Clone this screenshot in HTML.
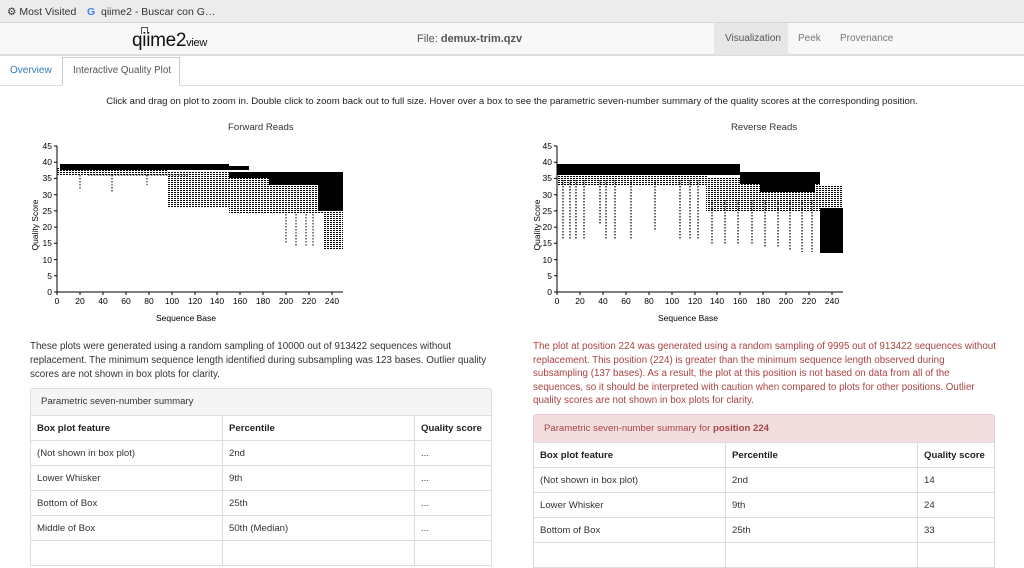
<!DOCTYPE html>
<html><head><meta charset="utf-8"><style>
*{margin:0;padding:0;box-sizing:border-box}
body{width:1024px;height:543px;overflow:hidden;background:#fff;font-family:"Liberation Sans",sans-serif;color:#333;position:relative;font-size:11px}
.a{position:absolute;white-space:nowrap}
table{border-collapse:collapse;position:absolute;font-size:9.6px;background:#fff}
td{border:1px solid #ddd;padding:0 6px;height:25px;vertical-align:middle}
th{border:1px solid #ddd;padding:0 6px;height:25px;text-align:left;font-weight:bold;color:#222}
</style></head><body>
<div class="a" style="left:0;top:0;width:1024px;height:23px;background:#ececec;border-bottom:1px solid #d6d6d6"></div>
<div class="a" style="left:7px;top:6px;font-size:10.5px;color:#333">⚙ Most Visited</div>
<div class="a" style="left:87px;top:6px;font-size:10.5px;color:#333"><span style="color:#4285f4;font-weight:bold">G</span>&nbsp; qiime2 - Buscar con G…</div>
<div class="a" style="left:0;top:23px;width:1024px;height:33px;background:#f8f8f8;border-bottom:2px solid #ddd"></div>
<div class="a" style="left:132px;top:30px;font-size:19px;color:#111;letter-spacing:-0.3px">qiime2<span style="font-size:11px">view</span></div>
<div class="a" style="left:141px;top:27px;width:7px;height:7px;border:1.5px solid #555;border-bottom:none"></div>
<div class="a" style="left:417px;top:33px;font-size:11px;color:#555">File: <b>demux-trim.qzv</b></div>
<div class="a" style="left:714px;top:23px;width:74px;height:32px;background:#e7e7e7"></div>
<div class="a" style="left:725px;top:33px;font-size:10px;color:#555">Visualization</div>
<div class="a" style="left:798px;top:33px;font-size:10px;color:#777">Peek</div>
<div class="a" style="left:840px;top:33px;font-size:10px;color:#777">Provenance</div>
<div class="a" style="left:0;top:85px;width:1024px;height:1px;background:#ddd"></div>
<div class="a" style="left:10px;top:65px;font-size:10px;color:#337ab7">Overview</div>
<div class="a" style="left:62px;top:57px;width:118px;height:29px;border:1px solid #ccc;border-bottom-color:#fff;background:#fff"></div>
<div class="a" style="left:73px;top:65px;font-size:9.8px;color:#555">Interactive Quality Plot</div>
<div class="a" style="left:0;top:96px;width:1024px;text-align:center;font-size:9.6px;color:#222">Click and drag on plot to zoom in. Double click to zoom back out to full size. Hover over a box to see the parametric seven-number summary of the quality scores at the corresponding position.</div>
<div class="a" style="left:228px;top:122px;font-size:9.6px;color:#333">Forward Reads</div>
<div class="a" style="left:731px;top:122px;font-size:9.6px;color:#333">Reverse Reads</div>

<svg class="a" style="left:0;top:135px" width="1024" height="190" viewBox="0 135 1024 190" font-family="Liberation Sans" font-size="8.5" fill="#000">
<defs><pattern id="s" patternUnits="userSpaceOnUse" width="3" height="2"><rect width="2" height="1" fill="#000"/></pattern></defs>
<g id="L">
<rect x="57" y="168" width="111" height="7" fill="url(#s)"/>
<rect x="168" y="172" width="61" height="36" fill="url(#s)"/>
<rect x="229" y="178" width="94" height="36" fill="url(#s)"/>
<rect x="323" y="211" width="20" height="39" fill="url(#s)"/>
<rect x="60" y="164" width="169" height="6"/>
<rect x="229" y="166" width="20" height="4"/>
<rect x="229" y="172" width="114" height="6"/>
<rect x="269" y="172" width="74" height="13"/>
<rect x="318" y="185" width="25" height="26"/>
<g stroke="#000" stroke-dasharray="1.5 1.5" stroke-width="1">
<line x1="88" y1="175" x2="188" y2="175"/><line x1="112" y1="175" x2="112" y2="193"/><line x1="286" y1="214" x2="286" y2="244"/><line x1="296" y1="214" x2="296" y2="246"/><line x1="306" y1="214" x2="306" y2="246"/><line x1="313" y1="214" x2="313" y2="246"/><line x1="80" y1="175" x2="80" y2="190"/><line x1="147" y1="175" x2="147" y2="185"/>
</g></g>
<rect x="557" y="164" width="183" height="11"/>
<rect x="557" y="175" width="150" height="10" fill="url(#s)"/>
<rect x="706" y="178" width="114" height="34" fill="url(#s)"/>
<rect x="740" y="172" width="80" height="12"/>
<rect x="760" y="184" width="55" height="8"/>
<rect x="820" y="185" width="23" height="22" fill="url(#s)"/>
<rect x="820" y="208" width="23" height="45"/>
<g stroke="#000" stroke-dasharray="1.5 1.5" stroke-width="1.2">
<line x1="563" y1="180" x2="563" y2="240"/><line x1="570" y1="180" x2="570" y2="240"/><line x1="576" y1="180" x2="576" y2="240"/><line x1="584" y1="180" x2="584" y2="240"/><line x1="600" y1="180" x2="600" y2="225"/><line x1="606" y1="180" x2="606" y2="240"/><line x1="615" y1="180" x2="615" y2="240"/><line x1="631" y1="180" x2="631" y2="240"/><line x1="655" y1="180" x2="655" y2="230"/><line x1="680" y1="180" x2="680" y2="240"/><line x1="690" y1="180" x2="690" y2="240"/><line x1="698" y1="180" x2="698" y2="240"/><line x1="712" y1="200" x2="712" y2="245"/><line x1="725" y1="200" x2="725" y2="245"/><line x1="738" y1="200" x2="738" y2="245"/><line x1="752" y1="200" x2="752" y2="245"/><line x1="765" y1="200" x2="765" y2="248"/><line x1="778" y1="200" x2="778" y2="248"/><line x1="790" y1="200" x2="790" y2="250"/><line x1="802" y1="200" x2="802" y2="252"/><line x1="812" y1="200" x2="812" y2="252"/>
</g>
<g stroke="#000" stroke-width="1" fill="none">
<path d="M57 146V292H343M557 146V292H843"/>
<path d="M54 146h3M54 162.2h3M54 178.4h3M54 194.7h3M54 210.9h3M54 227.1h3M54 243.3h3M54 259.6h3M54 275.8h3M54 292h3M554 146h3M554 162.2h3M554 178.4h3M554 194.7h3M554 210.9h3M554 227.1h3M554 243.3h3M554 259.6h3M554 275.8h3M554 292h3"/>
<path d="M57 292v3M80 292v3M103 292v3M126 292v3M149 292v3M172 292v3M195 292v3M217 292v3M240 292v3M263 292v3M286 292v3M309 292v3M332 292v3M557 292v3M580 292v3M603 292v3M626 292v3M649 292v3M672 292v3M695 292v3M717 292v3M740 292v3M763 292v3M786 292v3M809 292v3M832 292v3"/>
</g>
<g text-anchor="end"><text x="52" y="149">45</text><text x="52" y="165">40</text><text x="52" y="181">35</text><text x="52" y="198">30</text><text x="52" y="214">25</text><text x="52" y="230">20</text><text x="52" y="246">15</text><text x="52" y="263">10</text><text x="52" y="279">5</text><text x="52" y="295">0</text>
<text x="552" y="149">45</text><text x="552" y="165">40</text><text x="552" y="181">35</text><text x="552" y="198">30</text><text x="552" y="214">25</text><text x="552" y="230">20</text><text x="552" y="246">15</text><text x="552" y="263">10</text><text x="552" y="279">5</text><text x="552" y="295">0</text></g>
<g text-anchor="middle"><text x="57" y="304">0</text><text x="80" y="304">20</text><text x="103" y="304">40</text><text x="126" y="304">60</text><text x="149" y="304">80</text><text x="172" y="304">100</text><text x="195" y="304">120</text><text x="217" y="304">140</text><text x="240" y="304">160</text><text x="263" y="304">180</text><text x="286" y="304">200</text><text x="309" y="304">220</text><text x="332" y="304">240</text>
<text x="557" y="304">0</text><text x="580" y="304">20</text><text x="603" y="304">40</text><text x="626" y="304">60</text><text x="649" y="304">80</text><text x="672" y="304">100</text><text x="695" y="304">120</text><text x="717" y="304">140</text><text x="740" y="304">160</text><text x="763" y="304">180</text><text x="786" y="304">200</text><text x="809" y="304">220</text><text x="832" y="304">240</text>
<text x="186" y="321">Sequence Base</text><text x="688" y="321">Sequence Base</text>
<text transform="translate(38 225) rotate(-90)">Quality Score</text><text transform="translate(540 225) rotate(-90)">Quality Score</text></g>
</svg>

<div class="a" style="left:30px;top:340px;font-size:9.8px;line-height:14px;color:#333">These plots were generated using a random sampling of 10000 out of 913422 sequences without<br>replacement. The minimum sequence length identified during subsampling was 123 bases. Outlier quality<br>scores are not shown in box plots for clarity.</div>
<div class="a" style="left:30px;top:388px;width:462px;height:28px;background:#f5f5f5;border:1px solid #ddd;border-radius:3px 3px 0 0;padding:7px 10px;font-size:9.6px;color:#333">Parametric seven-number summary</div>
<table style="left:30px;top:415px;width:462px"><colgroup><col style="width:192px"><col style="width:192px"><col></colgroup>
<tr><th>Box plot feature</th><th>Percentile</th><th>Quality score</th></tr>
<tr><td>(Not shown in box plot)</td><td>2nd</td><td>...</td></tr>
<tr><td>Lower Whisker</td><td>9th</td><td>...</td></tr>
<tr><td>Bottom of Box</td><td>25th</td><td>...</td></tr>
<tr><td>Middle of Box</td><td>50th (Median)</td><td>...</td></tr>
<tr><td></td><td></td><td></td></tr></table>

<div class="a" style="left:533px;top:340px;font-size:9.8px;line-height:13.6px;color:#a94442">The plot at position 224 was generated using a random sampling of 9995 out of 913422 sequences without<br>replacement. This position (224) is greater than the minimum sequence length observed during<br>subsampling (137 bases). As a result, the plot at this position is not based on data from all of the<br>sequences, so it should be interpreted with caution when compared to plots for other positions. Outlier<br>quality scores are not shown in box plots for clarity.</div>
<div class="a" style="left:533px;top:414px;width:462px;height:29px;background:#f2dede;border:1px solid #ebccd1;border-radius:3px 3px 0 0;padding:8px 10px;font-size:9.6px;color:#a94442">Parametric seven-number summary for <b>position 224</b></div>
<table style="left:533px;top:442px;width:462px"><colgroup><col style="width:192px"><col style="width:192px"><col></colgroup>
<tr><th>Box plot feature</th><th>Percentile</th><th>Quality score</th></tr>
<tr><td>(Not shown in box plot)</td><td>2nd</td><td>14</td></tr>
<tr><td>Lower Whisker</td><td>9th</td><td>24</td></tr>
<tr><td>Bottom of Box</td><td>25th</td><td>33</td></tr>
<tr><td></td><td></td><td></td></tr></table>
</body></html>
